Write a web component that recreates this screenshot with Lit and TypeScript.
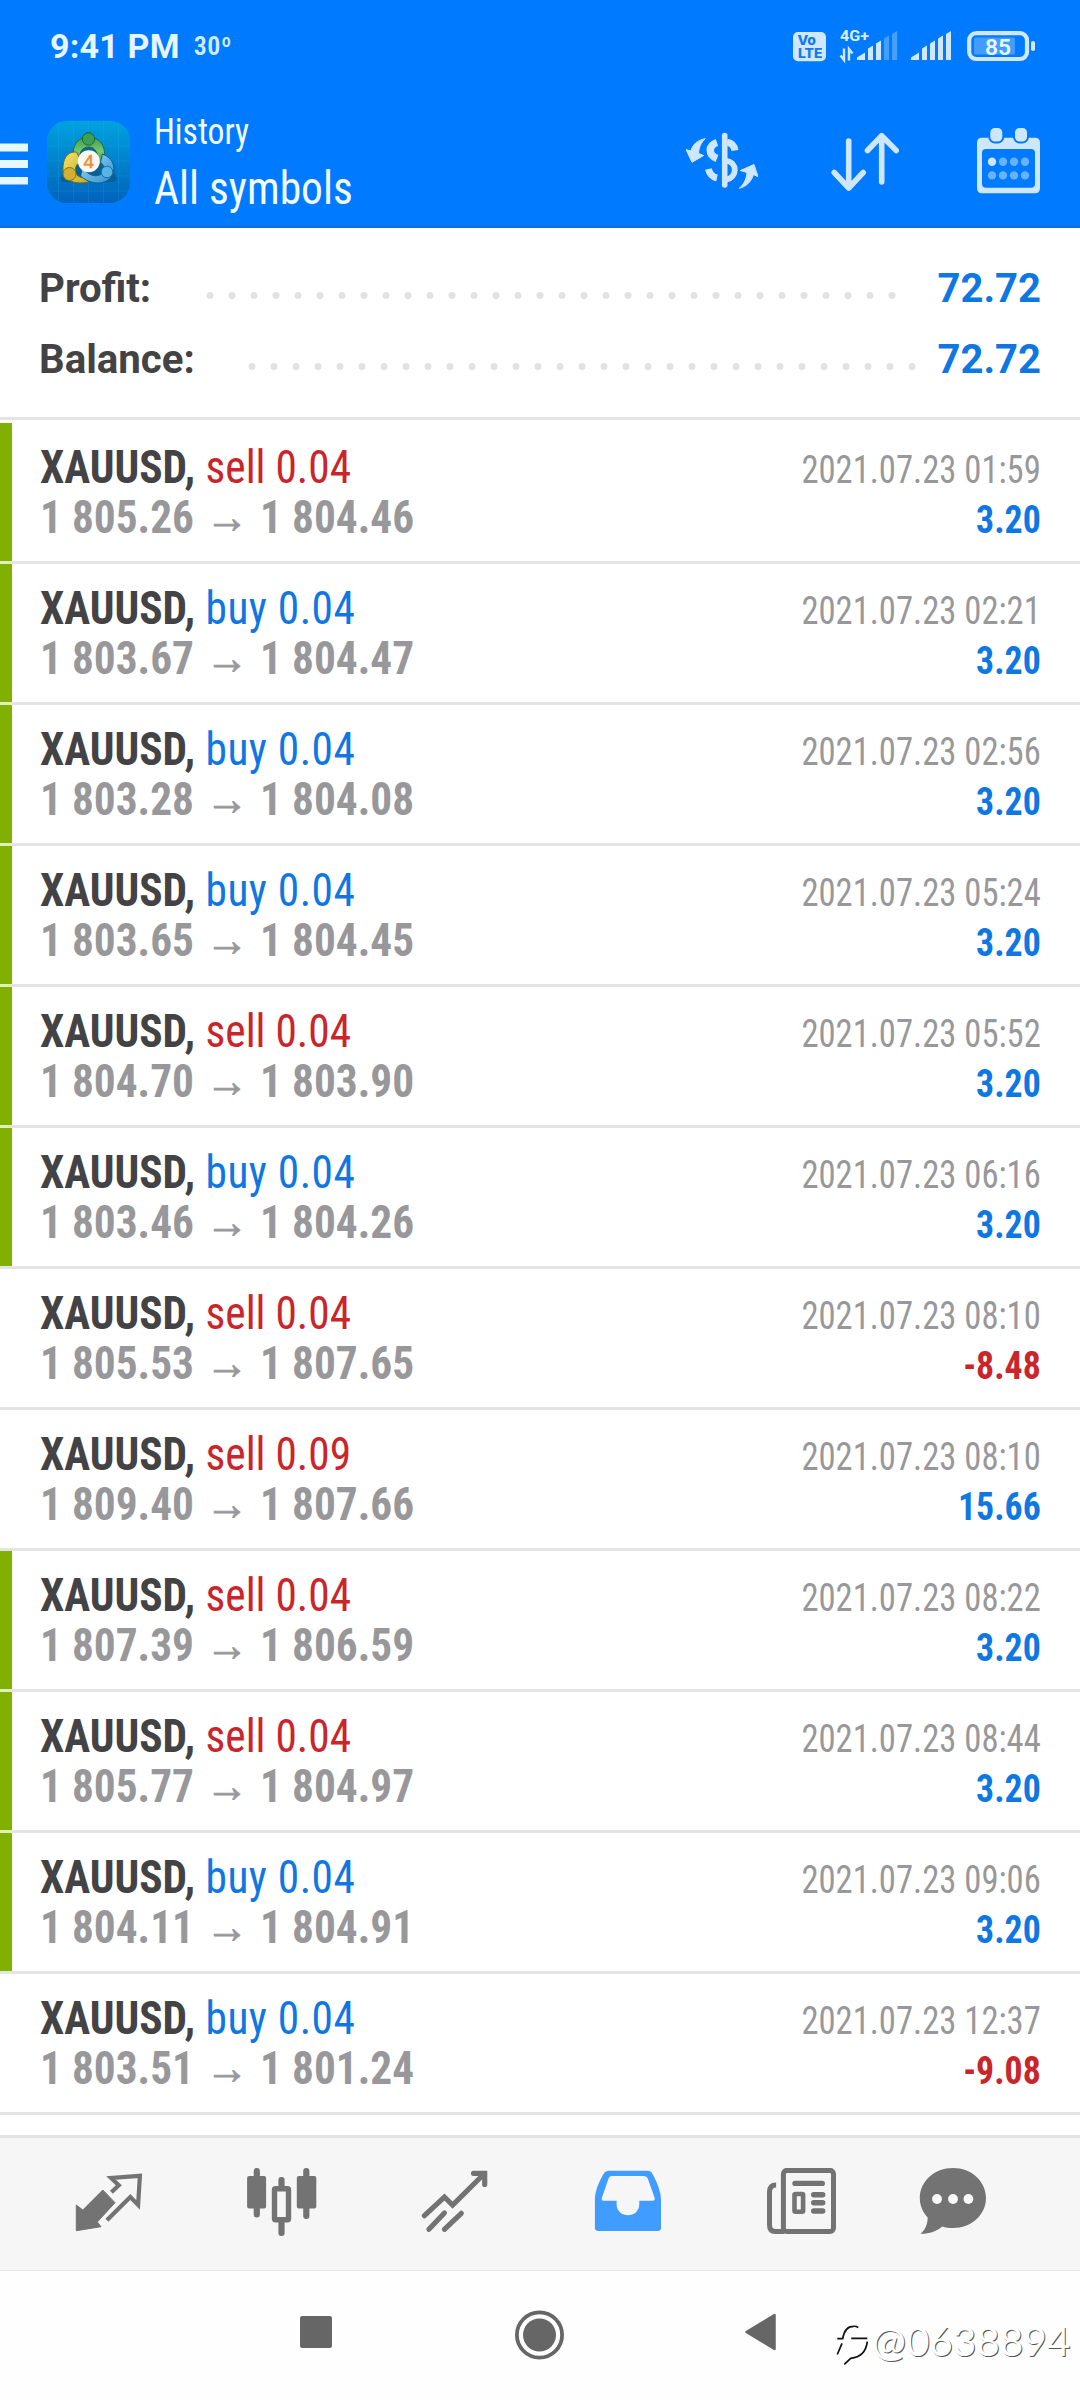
import { LitElement, html, css, svg } from "lit";
import { customElement, property } from "lit/decorators.js";
import { classMap } from "lit/directives/class-map.js";

type Side = "buy" | "sell";

interface Deal {
  side: Side;
  volume: string;
  open: string;
  close: string;
  time: string;
  profit: string;
  marked: boolean;
}

const deal = (
  side: Side, volume: string, open: string, close: string,
  time: string, profit: string, marked: boolean
): Deal => ({ side, volume, open, close, time, profit, marked });

const DEALS: Deal[] = [
  deal("sell", "0.04", "1 805.26", "1 804.46", "2021.07.23 01:59", "3.20", true),
  deal("buy", "0.04", "1 803.67", "1 804.47", "2021.07.23 02:21", "3.20", true),
  deal("buy", "0.04", "1 803.28", "1 804.08", "2021.07.23 02:56", "3.20", true),
  deal("buy", "0.04", "1 803.65", "1 804.45", "2021.07.23 05:24", "3.20", true),
  deal("sell", "0.04", "1 804.70", "1 803.90", "2021.07.23 05:52", "3.20", true),
  deal("buy", "0.04", "1 803.46", "1 804.26", "2021.07.23 06:16", "3.20", true),
  deal("sell", "0.04", "1 805.53", "1 807.65", "2021.07.23 08:10", "-8.48", false),
  deal("sell", "0.09", "1 809.40", "1 807.66", "2021.07.23 08:10", "15.66", false),
  deal("sell", "0.04", "1 807.39", "1 806.59", "2021.07.23 08:22", "3.20", true),
  deal("sell", "0.04", "1 805.77", "1 804.97", "2021.07.23 08:44", "3.20", true),
  deal("buy", "0.04", "1 804.11", "1 804.91", "2021.07.23 09:06", "3.20", true),
  deal("buy", "0.04", "1 803.51", "1 801.24", "2021.07.23 12:37", "-9.08", false),
];

@customElement("status-bar")
class StatusBar extends LitElement {
  static styles = css`
    :host { display: flex; align-items: center; height: 92px; box-sizing: border-box; padding: 0 45px 0 50px; color: #e6f5ff; font-family: Roboto, sans-serif; }
    .time { font-size: 34px; font-weight: 700; line-height: 92px; letter-spacing: 0.2px; }
    .temp { font-family: "Roboto Condensed", Roboto, sans-serif; font-size: 26px; font-weight: 600; margin-left: 14px; line-height: 92px; letter-spacing: 0.6px; color: #d2ebff; }
    .indicators { margin-left: auto; display: block; overflow: visible; }
    .volte { font: 800 13px Inter, sans-serif; fill: #1279ee; }
    .net { font: 700 15.5px Roboto, sans-serif; fill: #d9efff; }
    .charge { font: 600 22.5px Roboto, sans-serif; fill: #e9f7ff; }
  `;
  render() {
    return html`
      <span class="time">9:41 PM</span><span class="temp">30º</span>
      <svg class="indicators" width="242" height="46" viewBox="793 22 242 46">
        <rect x="793" y="31" width="33" height="29.3" rx="5" fill="#cfe8ff" />
        <text class="volte" x="797.5" y="43.6" textLength="18.5" lengthAdjust="spacingAndGlyphs">Vo</text>
        <text class="volte" x="798" y="56.8" textLength="24.5" lengthAdjust="spacingAndGlyphs">LTE</text>
        <text class="net" x="840" y="40" textLength="29" lengthAdjust="spacingAndGlyphs">4G+</text>
        <path d="M844 47.5V59L840.5 54.5M849 59.5V48L852.5 52.5" fill="none" stroke="#cfe8ff" stroke-width="2.4" />
        <g fill="#cfe8ff">
          <path d="M857 56.5L865 51.5V59H857zM868 47.5L873 44.5V59H868zM876 42.5L881 39.5V59H876z" />
          <path d="M884 37.5L889 34.5V59H884zM892 33L897.2 30V59H892z" fill="#459fff" />
          <path d="M911 56.5L919 51.5V59H911zM922 47.5L927 44.5V59H922zM930 42.5L935 39.5V59H930zM938 37.5L943 34.5V59H938zM946 33L951 30V59H946z" />
          <rect x="1031" y="40" width="4" height="10" rx="1.8" />
        </g>
        <rect x="969.2" y="32.2" width="57.8" height="25.8" rx="7" fill="none" stroke="#cfe8ff" stroke-width="4.2" />
        <rect x="974" y="36.5" width="41" height="17" rx="1.5" fill="#429dff" />
        <text class="charge" x="985" y="53.6" textLength="26" lengthAdjust="spacingAndGlyphs">85</text>
      </svg>`;
  }
}

@customElement("title-bar")
class TitleBar extends LitElement {
  static styles = css`
    :host { display: flex; height: 136px; box-sizing: border-box; border-bottom: 2px solid #1469d6; padding-right: 39px; color: #f3fbff; }
    svg { display: block; flex: none; }
    .menu { margin-top: 51px; }
    .logo { margin: 29px 0 0 19px; }
    .four { font: 400 19px "Liberation Sans", sans-serif; fill: #f08a35; stroke: #f08a35; stroke-width: 0.5; }
    .titles { margin: 18px auto 0 24px; font-family: "Roboto Condensed", Roboto, sans-serif; font-weight: 450; white-space: nowrap; }
    .titles div { transform-origin: left; transform: scaleX(0.935); }
    .section { font-size: 36px; line-height: 44px; }
    .filter { font-size: 46.5px; line-height: 60px; margin-top: 4px; }
    .actions { display: flex; margin-top: 34px; }
    .sort { margin-left: 73px; }
    .dates { margin-left: 78px; }
  `;
  render() {
    return html`
      <svg class="menu" width="28" height="42" fill="#e6f7ff"><path d="M0 .5h28v8H0zM0 17h28v8H0zM0 34h28v7.5H0z" /></svg>
      <svg class="logo" width="83" height="82" viewBox="46.5 121 83 82">
        <defs>
          <linearGradient id="bg" x1="0" y1="0" x2="0" y2="1"><stop offset="0" stop-color="#00a2e0" /><stop offset=".5" stop-color="#0082cc" /><stop offset="1" stop-color="#0062bd" /></linearGradient>
          <linearGradient id="green" x1="0" y1="0" x2="0" y2="1"><stop offset="0" stop-color="#3f9a4c" /><stop offset=".5" stop-color="#79c873" /><stop offset="1" stop-color="#2b7d39" /></linearGradient>
          <linearGradient id="gold" x1="0" y1="0" x2="1" y2="1"><stop offset="0" stop-color="#efe36a" /><stop offset="1" stop-color="#c2a822" /></linearGradient>
          <linearGradient id="sky" x1="0" y1="0" x2="1" y2="1"><stop offset="0" stop-color="#9bdcf6" /><stop offset="1" stop-color="#2f8dd0" /></linearGradient>
        </defs>
        <rect x="46.5" y="121" width="83" height="82" rx="20" fill="url(#bg)" />
        <path d="M58 122v80M73 121v82M88 121v82M103 121v82M118 122v80M47 146h82M47 161h82M47 176h82M47 191h82" stroke="#35b8ee" stroke-opacity=".16" stroke-width="1" />
        <path d="M88 136L112 178L64 178z" fill="#0c4f6e" stroke="#0c4f6e" stroke-width="8" stroke-linejoin="round" opacity=".55" />
        <g stroke-width="1" stroke-linejoin="round">
          <path d="M74 161C70 146 77 137 88 137C99 137 107 146 103 162L97 166C99 154 95 147 88.5 147C82 147 78 152 80 160z" fill="url(#green)" stroke="#1f6b3a" />
          <path d="M76 152C66 151 62 160 62.5 170C64 181 75 185 88 182L91 175C83 180 75 177 75 171C74.500 166 77 163 81 162z" fill="url(#gold)" stroke="#776a12" />
          <path d="M102 154C111 157 116 166 112 175C106 186 90 185 80 176L82 168C88 175 95 178 101 174C105 170 104 166 100 162z" fill="url(#sky)" stroke="#125b95" />
          <circle cx="88" cy="139" r="6.2" fill="#3f9d55" stroke="#1f6b3a" />
          <circle cx="69" cy="174" r="6.5" fill="#d3b02d" stroke="#8a7413" />
          <circle cx="106.500" cy="172" r="5.8" fill="#59b4e4" stroke="#1b6ca8" />
        </g>
        <circle cx="88.3" cy="161.3" r="11" fill="#fbf8f4" />
        <text class="four" x="83" y="168.2">4</text>
      </svg>
      <div class="titles"><div class="section">History</div><div class="filter">All symbols</div></div>
      <div class="actions">
        <svg width="72" height="68" viewBox="686 126 72 68">
          <g fill="none" stroke="#cfe6ff" stroke-width="6.4">
            <path d="M724.7 135.5V185" stroke-width="5.6" stroke-linecap="round" />
            <path d="M717 142.500C708 145.5 708 155 717 158.500" stroke-width="7.5" />
            <path d="M708.4 169C709.5 173.5 712.5 177 717 178M727 142.3C731 143 734.3 145.5 735 150.500" stroke-width="7" />
            <path d="M726 160.8C737.5 162 738 177 726 179.8" stroke-width="5.8" />
          </g>
          <path d="M705.3 138.7C697 140 692.5 145 690.8 151L686 149.5L692 162.3L703.7 155.5L698.5 153.5C699 147 701 142.5 705.3 138.7zM739.3 188.3C747 186.5 751.5 181 753.5 174.5L758 176.7L754 164.5L740.3 170.5L747 172.5C746.5 179 744 184 739.3 188.3z" fill="#cfe6ff" stroke="#cfe6ff" stroke-width="1" stroke-linejoin="round" />
        </svg>
        <svg class="sort" width="68" height="68" viewBox="831 126 68 68" fill="none" stroke="#cfe6ff" stroke-width="5.6" stroke-linecap="round" stroke-linejoin="round">
          <path d="M848.7 141V188M834.2 172.5L848.7 188L863.2 172.5M881.7 182V136M867.5 150.5L881.7 135.8L896.2 150.5" />
        </svg>
        <svg class="dates" width="64" height="68" viewBox="977 126 64 68">
          <path fill="#cfe6ff" fill-rule="evenodd" d="M982 137.7H1035Q1040 137.7 1040 142.7V188.3Q1040 193.3 1035 193.3H982Q977 193.3 977 188.3V142.7Q977 137.7 982 137.7zM986 149Q982 149 982 153V183.7Q982 187.7 986 187.7H1031Q1035 187.7 1035 183.7V153Q1035 149 1031 149z" />
          <g fill="#cfe6ff" stroke="#007aff" stroke-width="2"><rect x="989.3" y="127" width="14" height="15.5" rx="5.5" /><rect x="1014" y="127" width="14" height="15.5" rx="5.5" /></g>
          ${[0, 1].map((r) => [0, 1, 2, 3].map((c) => svg`<circle cx=${992 + c * 11} cy=${161.8 + r * 13.6} r="4.2" fill=${r + c ? "#69b2ff" : "#cfe6ff"} />`))}
        </svg>
      </div>`;
  }
}

@customElement("deal-row")
class DealRow extends LitElement {
  static styles = css`
    :host { display: block; font-family: "Roboto Condensed", Roboto, sans-serif; white-space: pre; }
    .row { display: flex; justify-content: space-between; height: 138px; box-sizing: border-box; padding: 0 39px 0 28px; border-left: 12px solid transparent; }
    .row.marked { border-left-color: #80b000; }
    .rule { height: 3px; background: #e4e4e4; }
    .rule.joined { background: linear-gradient(90deg, #e2f0b8 12px, #e4e4e4 12px); }
    .left { padding-top: 19px; font-size: 46px; line-height: 50px; transform-origin: left; transform: scaleX(0.942); }
    .symbol { font-weight: 700; color: #434345; }
    .sell, .buy { font-weight: 440; margin-left: 0.5px; }
    .sell { color: #c9252b; }
    .buy { color: #0f77e2; letter-spacing: 0.5px; }
    .prices { font-weight: 700; color: #98989b; }
    .arrow { margin: 0 1.5px; -webkit-text-stroke: 0.8px #98989b; }
    .right { padding-top: 22px; font-size: 38px; line-height: 50px; text-align: right; }
    .right div { transform-origin: right; }
    .time { color: #98989b; transform: scaleX(0.911); font-weight: 420; }
    .profit { font-weight: 700; color: #0f77e2; transform: scaleX(0.942); }
    .profit.loss { color: #c9252b; }
  `;
  @property({ attribute: false }) deal!: Deal;
  @property({ type: Boolean }) joined = false;
  render() {
    const d = this.deal;
    return html`<div class=${classMap({ row: true, marked: d.marked })}><div class="left"><div><span class="symbol">XAUUSD,</span> <span class=${d.side}>${d.side} ${d.volume}</span></div><div class="prices">${d.open} <span class="arrow">→</span> ${d.close}</div></div><div class="right"><div class="time">${d.time}</div><div class=${classMap({ profit: true, loss: d.profit.startsWith("-") })}>${d.profit}</div></div></div><div class=${classMap({ rule: true, joined: this.joined })}></div>`;
  }
}

@customElement("tab-bar")
class TabBar extends LitElement {
  static styles = css`
    :host { display: grid; grid-template-columns: repeat(5, 173px) 132px; justify-items: center; align-content: start; height: 136px; box-sizing: border-box; padding: 30px 0 0 22px; background: #f6f6f6; border-top: 3px solid #e3e3e3; border-bottom: 1px solid #e6e6e6; }
    svg { display: block; color: #737373; }
    .active { color: #409cff; }
  `;
  render() {
    return html`
      <svg width="72" height="70" viewBox="72.5 0 72 70">
        <path d="M75.8 62.7V37L82.3 42L102.3 22L114.5 34.7L96.8 54L100.5 58.7z" fill="currentColor" stroke="currentColor" stroke-linejoin="round" />
        <path d="M110.9 24.3L118.3 17.3L110.6 10L139.4 7.8L137.6 37L129.8 29L106.4 52.2" fill="none" stroke="currentColor" stroke-width="4.2" />
      </svg>
      <svg width="72" height="70" viewBox="245.5 0 72 70" fill="currentColor">
        <rect x="246.6" y="8" width="19" height="32.5" rx="2" /><rect x="253.2" y="0" width="6.2" height="49.5" rx="3" />
        <rect x="296.3" y="8" width="19.5" height="32.5" rx="2" /><rect x="302.7" y="0" width="6.2" height="51" rx="3" />
        <rect x="274" y="20.7" width="14" height="31" rx="1" fill="none" stroke="currentColor" stroke-width="5.4" />
        <rect x="277.9" y="9" width="6.2" height="12" rx="3" /><rect x="277.9" y="52" width="6.2" height="16" rx="3" />
      </svg>
      <svg width="72" height="70" viewBox="418.5 0 72 70" fill="none" stroke="currentColor" stroke-width="5.2" stroke-linecap="round">
        <path d="M423.9 47.7L443.9 29L452.1 37L483.5 6" />
        <path d="M473 5.3H484.2V16.5M443.9 45L428.4 61.3M460.8 45.3L443.9 61.3" />
      </svg>
      <svg class="active" width="72" height="70" viewBox="591.5 0 72 70">
        <path fill="currentColor" fill-rule="evenodd" d="M608.5 2.7H647Q650.5 2.7 652 6C657 15 660.5 24 660.5 32V60Q660.5 63 657 63H598Q594.4 63 594.4 60V32C594.4 23 598 15 603 6Q605 2.7 608.5 2.7zM611.5 8Q609.2 8 608.2 10L601.5 29.5Q600.5 32.7 603 32.7H616.1V36C616.1 51 638.8 51 638.8 36V32.7H652Q655 32.7 654 29.5L647.3 10.5Q646.3 8 643.5 8z" />
      </svg>
      <svg width="72" height="70" viewBox="764.5 0 72 70" fill="none" stroke="currentColor">
        <rect x="782.9" y="2.4" width="50.1" height="61.2" rx="3.5" stroke-width="5" />
        <path d="M775.6 17Q769 17 769 24V57Q769 63.5 775 63.5H784" stroke-width="5" />
        <path d="M794.5 15.4H821.8M813.2 26.7H822.2M813.2 34.8H822.2M813.2 43H822.2" stroke-width="5.4" stroke-linecap="round" />
        <rect x="794" y="26" width="8.6" height="17.8" rx="1" stroke-width="4.6" />
      </svg>
      <svg width="72" height="70" viewBox="917 0 72 70">
        <path d="M953 0C971.5 0 986 13.3 986 30S971.5 60 953 60C949 60 945.5 59.4 942.3 58.4C936 63.5 928.5 66 920.5 65.7C925 62 927.5 57 927.7 49.5C922.7 44.3 919.8 37.5 919.8 30C919.8 13.3 934.5 0 953 0z" fill="currentColor" />
        <g fill="#fafafa"><circle cx="937" cy="31" r="4.9" /><circle cx="953" cy="31" r="4.9" /><circle cx="968.4" cy="31" r="4.9" /></g>
      </svg>`;
  }
}

@customElement("app-root")
class AppRoot extends LitElement {
  static styles = css`
    :host { display: block; width: 1080px; height: 2400px; background: #fff; overflow: hidden; position: relative; }
    .top { background: #007aff; }
    .summary { padding: 25px 0 22px; border-bottom: 3px solid #e4e4e4; }
    .line { display: flex; align-items: center; height: 71px; font: 700 40px/71px Roboto, sans-serif; padding: 0 39px 0 39px; color: #434345; }
    .label { flex: none; }
    .profit .label { width: 160px; }
    .balance .label { width: 202px; }
    .label span { display: inline-block; transform-origin: left; transform: scaleX(1.005); }
    .dots { flex: none; height: 7px; margin-top: 14px; background: radial-gradient(circle, #e2e2e3 3.2px, transparent 3.8px) 0 0 / 22px 7px repeat-x; }
    .profit .dots { width: 704px; }
    .balance .dots { width: 682px; }
    .value { margin-left: auto; color: #0f77e2; }
    .list { padding: 3px 0 20px; }
    .nav { display: flex; align-items: flex-start; padding: 39px 0 0 300px; height: 129px; box-sizing: border-box; background: #fefefe; }
    .nav svg { display: block; }
    .home { margin-left: 183px; }
    .back { margin-left: 181px; margin-top: 3px; }
    .recent { margin-top: 6px; }
    .mark { position: absolute; left: 834px; top: 2312px; display: flex; height: 60px; }
    .mark span { font-family: Lato, sans-serif; font-size: 40.5px; line-height: 57px; color: #fff; text-shadow: 1px 1px 0.5px #555; }
  `;
  render() {
    return html`
      <div class="top"><status-bar></status-bar><title-bar></title-bar></div>
      <div class="summary">
        <div class="line profit"><div class="label"><span>Profit:</span></div><div class="dots"></div><div class="value">72.72</div></div>
        <div class="line balance"><div class="label"><span>Balance:</span></div><div class="dots"></div><div class="value">72.72</div></div>
      </div>
      <div class="list">
        ${DEALS.map((d, i) => html`<deal-row .deal=${d} ?joined=${d.marked && !!DEALS[i + 1]?.marked}></deal-row>`)}
      </div>
      <tab-bar></tab-bar>
      <div class="nav">
        <svg class="recent" width="32" height="32"><rect width="32" height="32" rx="2" fill="#666" /></svg>
        <svg class="home" width="49" height="50" viewBox="0 0 49 50"><circle cx="24.5" cy="25" r="22.6" fill="none" stroke="#666" stroke-width="3.8" /><circle cx="24.5" cy="25" r="16.5" fill="#666" /></svg>
        <svg class="back" width="31" height="38" viewBox="0 0 31 38"><path d="M29.5 2V36L1.5 19z" fill="#666" stroke="#666" stroke-width="2.5" stroke-linejoin="round" /></svg>
      </div>
      <div class="mark">
        <svg width="38" height="60" viewBox="834 2312 38 60" fill="none" stroke="#111" stroke-width="1.7">
          <path d="M837.3 2338.7H842.7C844 2331 848 2326.3 853.3 2326.3Q856 2326 858.3 2327.5M851.3 2338.4H867.3M842 2343.3L837.3 2354.5M867.3 2341.7C866 2352 860 2357.5 850.7 2358.3L844.3 2364.3" />
        </svg><span>@0638894</span>
      </div>`;
  }
}
